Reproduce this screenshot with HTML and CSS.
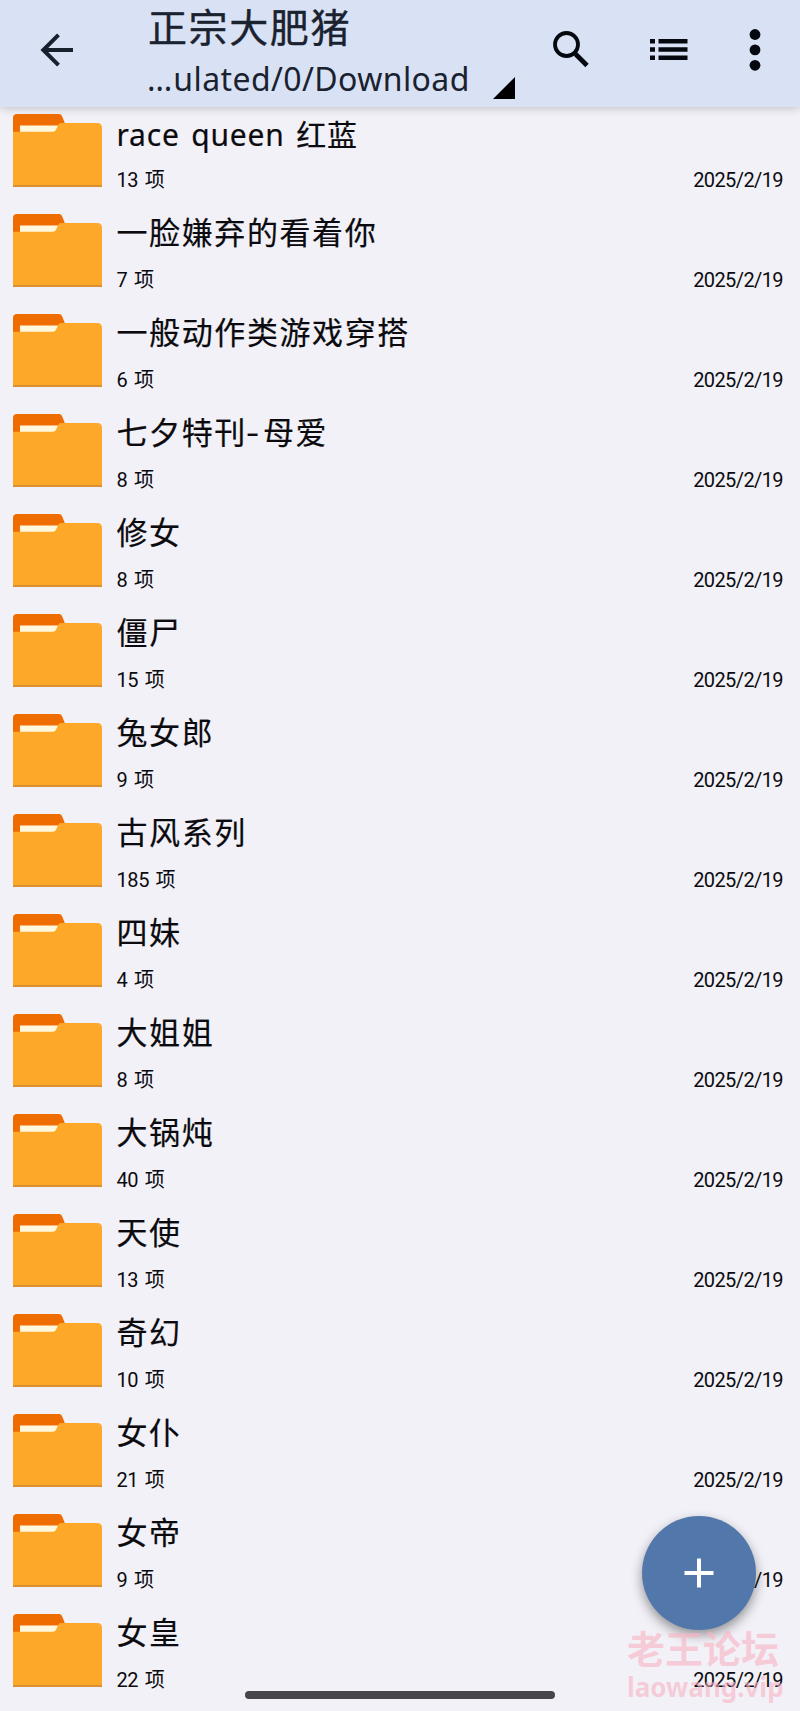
FILE: index.html
```html
<!DOCTYPE html>
<html lang="zh-CN">
<head>
    <meta charset="UTF-8">
    <meta name="viewport" content="width=device-width, initial-scale=1.0">
    <title>正宗大肥猪</title>
    <link rel="stylesheet" href="styles.css">
</head>
<body>
    <svg class="symbols" width="0" height="0">
        <symbol id="folder" viewBox="0 0 89 73">
            <path fill="#ef6c00" d="M0 18V4q0-4 4-4h42q2 0 3 2l4 10v8H0z"/>
            <path fill="#fff8dc" d="M7 11.5h40V19H7z"/>
            <path fill="#fda829" d="M0 17.7h40q2 0 3-2l2-4.500q1-2.200 3-2.200h36q5 0 5 5v59H0z"/>
            <path fill="#d99032" d="M0 71h89v2H0z"/>
        </symbol>
    </svg>

    <header class="toolbar">
        <svg class="back" width="34" height="34" viewBox="0 0 34 34" fill="none" stroke="#17202c" stroke-width="4">
            <path d="M33 17H3M18.5 1.8L3.3 17l15.2 15.2"/>
        </svg>
        <div class="location">
            <div class="title">正宗大肥猪</div>
            <div class="path"><span class="dots">…</span>ulated/0/Download</div>
        </div>
        <svg class="corner" width="22" height="22" viewBox="0 0 22 22"><path d="M22 0v22H0z"/></svg>
        <svg class="search" width="36" height="37" viewBox="0 0 36 37" fill="none" stroke="#05080e">
            <circle cx="13.5" cy="13.5" r="11.5" stroke-width="3.8"/>
            <path d="M22.5 23L34 34.5" stroke-width="4.8"/>
        </svg>
        <svg class="view" width="38" height="22" viewBox="0 0 38 22" fill="#05080e">
            <path d="M0 0h5v4.6H0zM8.5 0H37.5v4.6H8.5zM0 8.2h5v4.6H0zM8.5 8.2H37.5v4.6H8.5zM0 16.4h5V21H0zM8.5 16.4H37.5V21H8.5z"/>
        </svg>
        <svg class="more" width="12" height="42" viewBox="0 0 12 42" fill="#05080e">
            <circle cx="6" cy="5.5" r="5.4"/>
            <circle cx="6" cy="20.9" r="5.4"/>
            <circle cx="6" cy="36.3" r="5.4"/>
        </svg>
    </header>

    <ul class="files">
        <li class="file">
            <svg class="folder"><use href="#folder"/></svg>
            <div class="info">
                <div class="name latin">race queen 红蓝</div>
                <div class="meta"><span>13 项</span><span class="date">2025/2/19</span></div>
            </div>
        </li>
        <li class="file">
            <svg class="folder"><use href="#folder"/></svg>
            <div class="info">
                <div class="name">一脸嫌弃的看着你</div>
                <div class="meta"><span>7 项</span><span class="date">2025/2/19</span></div>
            </div>
        </li>
        <li class="file">
            <svg class="folder"><use href="#folder"/></svg>
            <div class="info">
                <div class="name">一般动作类游戏穿搭</div>
                <div class="meta"><span>6 项</span><span class="date">2025/2/19</span></div>
            </div>
        </li>
        <li class="file">
            <svg class="folder"><use href="#folder"/></svg>
            <div class="info">
                <div class="name">七夕特刊<span class="dash">-</span>母爱</div>
                <div class="meta"><span>8 项</span><span class="date">2025/2/19</span></div>
            </div>
        </li>
        <li class="file">
            <svg class="folder"><use href="#folder"/></svg>
            <div class="info">
                <div class="name">修女</div>
                <div class="meta"><span>8 项</span><span class="date">2025/2/19</span></div>
            </div>
        </li>
        <li class="file">
            <svg class="folder"><use href="#folder"/></svg>
            <div class="info">
                <div class="name">僵尸</div>
                <div class="meta"><span>15 项</span><span class="date">2025/2/19</span></div>
            </div>
        </li>
        <li class="file">
            <svg class="folder"><use href="#folder"/></svg>
            <div class="info">
                <div class="name">兔女郎</div>
                <div class="meta"><span>9 项</span><span class="date">2025/2/19</span></div>
            </div>
        </li>
        <li class="file">
            <svg class="folder"><use href="#folder"/></svg>
            <div class="info">
                <div class="name">古风系列</div>
                <div class="meta"><span>185 项</span><span class="date">2025/2/19</span></div>
            </div>
        </li>
        <li class="file">
            <svg class="folder"><use href="#folder"/></svg>
            <div class="info">
                <div class="name">四妹</div>
                <div class="meta"><span>4 项</span><span class="date">2025/2/19</span></div>
            </div>
        </li>
        <li class="file">
            <svg class="folder"><use href="#folder"/></svg>
            <div class="info">
                <div class="name">大姐姐</div>
                <div class="meta"><span>8 项</span><span class="date">2025/2/19</span></div>
            </div>
        </li>
        <li class="file">
            <svg class="folder"><use href="#folder"/></svg>
            <div class="info">
                <div class="name">大锅炖</div>
                <div class="meta"><span>40 项</span><span class="date">2025/2/19</span></div>
            </div>
        </li>
        <li class="file">
            <svg class="folder"><use href="#folder"/></svg>
            <div class="info">
                <div class="name">天使</div>
                <div class="meta"><span>13 项</span><span class="date">2025/2/19</span></div>
            </div>
        </li>
        <li class="file">
            <svg class="folder"><use href="#folder"/></svg>
            <div class="info">
                <div class="name">奇幻</div>
                <div class="meta"><span>10 项</span><span class="date">2025/2/19</span></div>
            </div>
        </li>
        <li class="file">
            <svg class="folder"><use href="#folder"/></svg>
            <div class="info">
                <div class="name">女仆</div>
                <div class="meta"><span>21 项</span><span class="date">2025/2/19</span></div>
            </div>
        </li>
        <li class="file">
            <svg class="folder"><use href="#folder"/></svg>
            <div class="info">
                <div class="name">女帝</div>
                <div class="meta"><span>9 项</span><span class="date">2025/2/19</span></div>
            </div>
        </li>
        <li class="file">
            <svg class="folder"><use href="#folder"/></svg>
            <div class="info">
                <div class="name">女皇</div>
                <div class="meta"><span>22 项</span><span class="date">2025/2/19</span></div>
            </div>
        </li>
    </ul>

    <button class="fab" aria-label="新建">
        <svg width="30" height="30" viewBox="0 0 30 30" fill="#fff"><path d="M13 .5h4V13h12.500v4H17v12.500h-4V17H.5v-4H13z"/></svg>
    </button>
    <div class="watermark">
        <div class="watermark-name">老王论坛</div>
        <div class="watermark-url">laowang.vip</div>
    </div>
    <div class="home-bar"></div>
</body>
</html>
```
FILE: styles.css
```css
* {
    box-sizing: border-box;
}
body {
    position: relative;
    margin: 0;
    height: 1711px;
    overflow: hidden;
    background-color: #f2f1f7;
    color: #0b0b0f;
    font-family: Roboto, "Noto Sans CJK SC", sans-serif;
}
.symbols {
    position: absolute;
}
.toolbar {
    display: flex;
    height: 107px;
    padding-left: 40px;
    background-color: #d9e2f5;
    box-shadow: 0 1px 9px rgba(0, 0, 0, 0.22);
}
.toolbar svg {
    flex: none;
}
.back {
    margin-top: 33px;
}
.location {
    width: 346px;
    margin-left: 73px;
    color: #1a2230;
    white-space: nowrap;
}
.title {
    height: 58px;
    padding-left: 1px;
    font-size: 39px;
    line-height: 59px;
    letter-spacing: 1.6px;
    -webkit-text-stroke: 0.4px #1a2230;
}
.path {
    height: 42px;
    font-family: "Noto Sans", sans-serif;
    font-size: 32px;
    line-height: 42px;
    letter-spacing: 0.4px;
}
.dots {
    letter-spacing: 1px;
}
.corner {
    margin-top: 77px;
}
.search {
    margin: 31px 0 0 38px;
}
.view {
    margin: 39px 0 0 61px;
}
.more {
    margin: 29px 0 0 61px;
}
.files {
    margin: 0;
    padding: 1px 0 0;
    list-style: none;
}
.file {
    display: flex;
    height: 100px;
    padding: 6px 17px 0 12.500px;
}
.folder {
    flex: none;
    width: 89px;
    height: 73px;
}
.info {
    flex: 1;
    margin-left: 15px;
}
.name {
    height: 42px;
    font-size: 31px;
    line-height: 40px;
    letter-spacing: 1.6px;
    -webkit-text-stroke: 0.2px #0b0b0f;
}
.latin {
    font-family: "Noto Sans", "Noto Sans CJK SC", sans-serif;
    font-size: 30px;
    line-height: 42px;
    letter-spacing: 0.8px;
    word-spacing: 3px;
}
.dash {
    display: inline-block;
    width: 16px;
    transform: scaleX(1.3);
    transform-origin: left;
}
.meta {
    display: flex;
    justify-content: space-between;
    height: 48px;
    font-size: 20px;
    line-height: 48px;
    letter-spacing: -0.4px;
    word-spacing: 2px;
}
.date {
    letter-spacing: -0.6px;
}
.fab {
    position: absolute;
    left: 642px;
    top: 1516px;
    display: flex;
    align-items: center;
    justify-content: center;
    width: 114px;
    height: 114px;
    padding: 0;
    border: 0;
    border-radius: 50%;
    background-color: #5278ab;
    box-shadow: 0 5px 12px rgba(0, 0, 0, 0.4);
}
.watermark {
    position: absolute;
    left: 627px;
    top: 1626px;
    color: rgba(250, 178, 196, 0.6);
    font-family: "Noto Sans", "Noto Sans CJK SC", sans-serif;
    font-weight: bold;
    white-space: nowrap;
}
.watermark-name {
    height: 44px;
    font-size: 38px;
    line-height: 44px;
}
.watermark-url {
    height: 34px;
    font-size: 26px;
    line-height: 34px;
}
.home-bar {
    position: absolute;
    left: 245px;
    top: 1691px;
    width: 310px;
    height: 8px;
    border-radius: 4px;
    background-color: #464549;
}
```
